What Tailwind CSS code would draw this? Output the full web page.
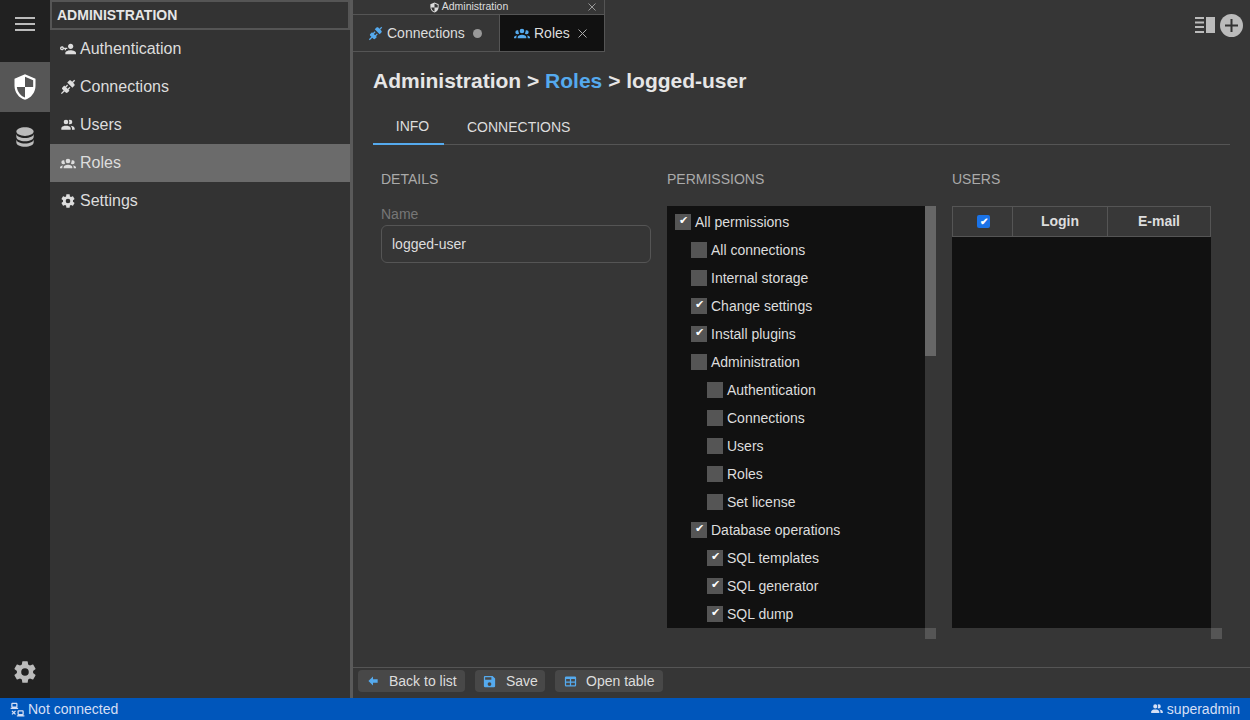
<!DOCTYPE html>
<html lang="en">
<head>
  <meta charset="UTF-8">
  <title>Administration</title>
  <script src="https://cdn.jsdelivr.net/npm/@tailwindcss/browser@4"></script>
</head>
<body class="w-[1250px] h-[720px] overflow-hidden bg-[#363636] text-[#dddddd] font-['Liberation_Sans',Arial,sans-serif]">
<div class="flex flex-col h-[720px]">
  <div class="flex flex-1 min-h-0">

    <!-- icon rail -->
    <div class="w-[50px] bg-[#212121] flex flex-col items-center shrink-0">
      <div class="h-[62px] w-full flex flex-col items-center justify-center gap-[4px] pb-[14px]">
        <div class="w-[20px] h-[2px] bg-[#bbbbbb]"></div>
        <div class="w-[20px] h-[2px] bg-[#bbbbbb]"></div>
        <div class="w-[20px] h-[2px] bg-[#bbbbbb]"></div>
      </div>
      <div class="h-[50px] w-full bg-[#565656] flex items-center justify-center">
        <svg class="w-[28px] h-[28px] text-white" viewBox="0 0 24 24" fill="currentColor"><path transform="matrix(-1 0 0 1 24 0)" d="M12,12H19C18.47,16.11 15.72,19.78 12,20.92V12H5V6.3L12,3.19M12,1L3,5V11C3,16.55 6.84,21.73 12,23C17.16,21.73 21,16.55 21,11V5L12,1Z"/></svg>
      </div>
      <div class="h-[50px] w-full flex items-center justify-center">
        <svg class="w-[26px] h-[26px] text-[#bbbbbb]" viewBox="0 0 24 24" fill="currentColor"><path d="M12,3C7.58,3 4,4.79 4,7C4,9.21 7.58,11 12,11C16.42,11 20,9.21 20,7C20,4.79 16.42,3 12,3M4,9V12C4,14.21 7.58,16 12,16C16.42,16 20,14.21 20,12V9C20,11.21 16.42,13 12,13C7.58,13 4,11.21 4,9M4,14V17C4,19.21 7.58,21 12,21C16.42,21 20,19.21 20,17V14C20,16.21 16.42,18 12,18C7.58,18 4,16.21 4,14Z"/></svg>
      </div>
      <div class="mt-auto h-[39px] flex items-start justify-center">
        <svg class="w-[26px] h-[26px] text-[#bbbbbb]" viewBox="0 0 24 24" fill="currentColor"><path d="M12,15.5A3.5,3.5 0 0,1 8.5,12A3.5,3.5 0 0,1 12,8.5A3.5,3.5 0 0,1 15.5,12A3.5,3.5 0 0,1 12,15.5M19.43,12.97C19.47,12.65 19.5,12.33 19.5,12C19.5,11.67 19.47,11.34 19.43,11L21.54,9.37C21.73,9.22 21.78,8.95 21.66,8.73L19.66,5.27C19.54,5.05 19.27,4.96 19.05,5.05L16.56,6.05C16.04,5.66 15.5,5.32 14.87,5.07L14.5,2.42C14.46,2.18 14.25,2 14,2H10C9.75,2 9.54,2.18 9.5,2.42L9.13,5.07C8.5,5.32 7.96,5.66 7.44,6.05L4.95,5.05C4.73,4.96 4.46,5.05 4.34,5.27L2.34,8.73C2.21,8.95 2.27,9.22 2.46,9.37L4.57,11C4.53,11.34 4.5,11.67 4.5,12C4.5,12.33 4.53,12.65 4.57,12.97L2.46,14.63C2.27,14.78 2.21,15.05 2.34,15.27L4.34,18.73C4.46,18.95 4.73,19.03 4.95,18.95L7.44,17.94C7.96,18.34 8.5,18.68 9.13,18.93L9.5,21.58C9.54,21.82 9.75,22 10,22H14C14.25,22 14.46,21.82 14.5,21.58L14.87,18.93C15.5,18.67 16.04,18.34 16.56,17.94L19.05,18.95C19.27,19.03 19.54,18.95 19.66,18.73L21.66,15.27C21.78,15.05 21.73,14.78 21.54,14.63L19.43,12.97Z"/></svg>
      </div>
    </div>

    <!-- admin sidebar -->
    <div class="w-[300px] bg-[#333333] shrink-0">
      <div class="h-[30px] border-2 border-[#555555] flex items-center pl-[5px] text-[14px] font-bold text-[#e6e6e6]">ADMINISTRATION</div>
      <div class="h-[38px] flex items-center gap-[4px] pl-[10px] text-[16px]">
        <svg class="w-[16px] h-[16px] text-[#dddddd]" viewBox="0 0 24 24" fill="currentColor"><path d="M11 10V12H9V14H7V12H5.8C5.4 13.2 4.3 14 3 14C1.3 14 0 12.7 0 11S1.3 8 3 8C4.3 8 5.4 8.8 5.8 10H11M3 10C2.4 10 2 10.4 2 11S2.4 12 3 12 4 11.6 4 11 3.6 10 3 10M16 14C18.7 14 24 15.3 24 18V20H8V18C8 15.3 13.3 14 16 14M16 12C13.8 12 12 10.2 12 8S13.8 4 16 4 20 5.8 20 8 18.2 12 16 12Z"/></svg>
        <span>Authentication</span>
      </div>
      <div class="h-[38px] flex items-center gap-[4px] pl-[10px] text-[16px]">
        <svg class="w-[16px] h-[16px] text-[#dddddd]" viewBox="0 0 24 24" fill="currentColor"><path d="M21.4 7.5C22.2 8.3 22.2 9.6 21.4 10.3L18.6 13.1L10.8 5.3L13.6 2.5C14.4 1.7 15.7 1.7 16.5 2.5L18.3 4.3L21.3 1.3L22.7 2.7L19.7 5.7L21.4 7.5M15.6 13.3L14.2 11.9L11.4 14.7L9.3 12.6L12.1 9.8L10.7 8.4L7.9 11.2L6.4 9.8L3.6 12.6C2.8 13.4 2.8 14.7 3.6 15.4L5.4 17.2L1.4 21.2L2.8 22.6L6.8 18.6L8.6 20.4C9.4 21.2 10.7 21.2 11.4 20.4L14.2 17.6L12.8 16.2L15.6 13.3Z"/></svg>
        <span>Connections</span>
      </div>
      <div class="h-[38px] flex items-center gap-[4px] pl-[10px] text-[16px]">
        <svg class="w-[16px] h-[16px] text-[#dddddd]" viewBox="0 0 24 24" fill="currentColor"><path d="M16 17V19H2V17S2 13 9 13 16 17 16 17M12.5 7.5A3.5 3.5 0 1 0 9 11A3.5 3.5 0 0 0 12.5 7.5M15.94 13A5.32 5.32 0 0 1 18 17V19H22V17S22 13.37 15.94 13M15 4A3.39 3.39 0 0 0 13.07 4.59A5 5 0 0 1 13.07 10.41A3.39 3.39 0 0 0 15 11A3.5 3.5 0 0 0 15 4Z"/></svg>
        <span>Users</span>
      </div>
      <div class="h-[38px] flex items-center gap-[4px] pl-[10px] text-[16px] bg-[#6b6b6b]">
        <svg class="w-[16px] h-[16px] text-[#dddddd]" viewBox="0 0 24 24" fill="currentColor"><path d="M12,5.5A3.5,3.5 0 0,1 15.5,9A3.5,3.5 0 0,1 12,12.5A3.5,3.5 0 0,1 8.5,9A3.5,3.5 0 0,1 12,5.5M5,8C5.56,8 6.08,8.15 6.53,8.42C6.38,9.85 6.8,11.27 7.66,12.38C7.16,13.34 6.16,14 5,14A3,3 0 0,1 2,11A3,3 0 0,1 5,8M19,8A3,3 0 0,1 22,11A3,3 0 0,1 19,14C17.84,14 16.84,13.34 16.34,12.38C17.2,11.27 17.62,9.85 17.47,8.42C17.92,8.15 18.44,8 19,8M5.5,18.25C5.5,16.18 8.41,14.5 12,14.5C15.59,14.5 18.5,16.18 18.5,18.25V20H5.5V18.25M0,20V18.5C0,17.11 1.89,15.94 4.45,15.6C3.86,16.28 3.5,17.22 3.5,18.25V20H0M24,20H20.5V18.25C20.5,17.22 20.14,16.28 19.55,15.6C22.11,15.94 24,17.11 24,18.5V20Z"/></svg>
        <span>Roles</span>
      </div>
      <div class="h-[38px] flex items-center gap-[4px] pl-[10px] text-[16px]">
        <svg class="w-[16px] h-[16px] text-[#dddddd]" viewBox="0 0 24 24" fill="currentColor"><path d="M12,15.5A3.5,3.5 0 0,1 8.5,12A3.5,3.5 0 0,1 12,8.5A3.5,3.5 0 0,1 15.5,12A3.5,3.5 0 0,1 12,15.5M19.43,12.97C19.47,12.65 19.5,12.33 19.5,12C19.5,11.67 19.47,11.34 19.43,11L21.54,9.37C21.73,9.22 21.78,8.95 21.66,8.73L19.66,5.27C19.54,5.05 19.27,4.96 19.05,5.05L16.56,6.05C16.04,5.66 15.5,5.32 14.87,5.07L14.5,2.42C14.46,2.18 14.25,2 14,2H10C9.75,2 9.54,2.18 9.5,2.42L9.13,5.07C8.5,5.32 7.96,5.66 7.44,6.05L4.95,5.05C4.73,4.96 4.46,5.05 4.34,5.27L2.34,8.73C2.21,8.95 2.27,9.22 2.46,9.37L4.57,11C4.53,11.34 4.5,11.67 4.5,12C4.5,12.33 4.53,12.65 4.57,12.97L2.46,14.63C2.27,14.78 2.21,15.05 2.34,15.27L4.34,18.73C4.46,18.95 4.73,19.03 4.95,18.95L7.44,17.94C7.96,18.34 8.5,18.68 9.13,18.93L9.5,21.58C9.54,21.82 9.75,22 10,22H14C14.25,22 14.46,21.82 14.5,21.58L14.87,18.93C15.5,18.67 16.04,18.34 16.56,17.94L19.05,18.95C19.27,19.03 19.54,18.95 19.66,18.73L21.66,15.27C21.78,15.05 21.73,14.78 21.54,14.63L19.43,12.97Z"/></svg>
        <span>Settings</span>
      </div>
    </div>

    <!-- splitter -->
    <div class="w-[3px] bg-[#5a5a5a] shrink-0"></div>

    <!-- main -->
    <div class="flex-1 min-w-0 flex flex-col bg-[#363636]">
      <!-- tab strip -->
      <div class="h-[52px] flex shrink-0">
        <div class="w-[252px] flex flex-col border-r border-[#555555] border-b">
          <div class="h-[15px] border-b border-[#555555] flex items-center justify-center relative text-[10.5px] text-[#dddddd] gap-[2px] pr-[20px]">
            <svg class="w-[11px] h-[11px] text-[#dddddd]" viewBox="0 0 24 24" fill="currentColor"><path transform="matrix(-1 0 0 1 24 0)" d="M12,12H19C18.47,16.11 15.72,19.78 12,20.92V12H5V6.3L12,3.19M12,1L3,5V11C3,16.55 6.84,21.73 12,23C17.16,21.73 21,16.55 21,11V5L12,1Z"/></svg>
            <span>Administration</span>
            <svg class="absolute right-[8px] top-[3px] w-[8px] h-[8px] text-[#999999]" viewBox="0 0 8 8" fill="none" stroke="currentColor" stroke-width="1"><path d="M0.5 0.5L7.5 7.5M7.5 0.5L0.5 7.5"/></svg>
          </div>
          <div class="flex flex-1">
            <div class="w-[147px] border-r border-[#555555] flex items-center pl-[15px] gap-[4px] text-[14px]">
              <svg class="w-[15px] h-[15px] text-[#55aaee]" viewBox="0 0 24 24" fill="currentColor"><path d="M21.4 7.5C22.2 8.3 22.2 9.6 21.4 10.3L18.6 13.1L10.8 5.3L13.6 2.5C14.4 1.7 15.7 1.7 16.5 2.5L18.3 4.3L21.3 1.3L22.7 2.7L19.7 5.7L21.4 7.5M15.6 13.3L14.2 11.9L11.4 14.7L9.3 12.6L12.1 9.8L10.7 8.4L7.9 11.2L6.4 9.8L3.6 12.6C2.8 13.4 2.8 14.7 3.6 15.4L5.4 17.2L1.4 21.2L2.8 22.6L6.8 18.6L8.6 20.4C9.4 21.2 10.7 21.2 11.4 20.4L14.2 17.6L12.8 16.2L15.6 13.3Z"/></svg>
              <span>Connections</span>
              <span class="ml-[4px] w-[9px] h-[9px] rounded-full bg-[#999999]"></span>
            </div>
            <div class="flex-1 bg-[#111111] flex items-center pl-[14px] gap-[4px] text-[14px]">
              <svg class="w-[16px] h-[16px] text-[#55aaee]" viewBox="0 0 24 24" fill="currentColor"><path d="M12,5.5A3.5,3.5 0 0,1 15.5,9A3.5,3.5 0 0,1 12,12.5A3.5,3.5 0 0,1 8.5,9A3.5,3.5 0 0,1 12,5.5M5,8C5.56,8 6.08,8.15 6.53,8.42C6.38,9.85 6.8,11.27 7.66,12.38C7.16,13.34 6.16,14 5,14A3,3 0 0,1 2,11A3,3 0 0,1 5,8M19,8A3,3 0 0,1 22,11A3,3 0 0,1 19,14C17.84,14 16.84,13.34 16.34,12.38C17.2,11.27 17.62,9.85 17.47,8.42C17.92,8.15 18.44,8 19,8M5.5,18.25C5.5,16.18 8.41,14.5 12,14.5C15.59,14.5 18.5,16.18 18.5,18.25V20H5.5V18.25M0,20V18.5C0,17.11 1.89,15.94 4.45,15.6C3.86,16.28 3.5,17.22 3.5,18.25V20H0M24,20H20.5V18.25C20.5,17.22 20.14,16.28 19.55,15.6C22.11,15.94 24,17.11 24,18.5V20Z"/></svg>
              <span>Roles</span>
              <svg class="ml-[4px] w-[9px] h-[9px] text-[#aaaaaa]" viewBox="0 0 9 9" fill="none" stroke="currentColor" stroke-width="1"><path d="M0.5 0.5L8.5 8.5M8.5 0.5L0.5 8.5"/></svg>
            </div>
          </div>
        </div>
        <div class="flex-1 flex justify-end items-start pt-[14px] pr-[7px] gap-[5px]">
          <svg class="w-[20px] h-[16px] mt-[3px] text-[#bbbbbb]" viewBox="0 0 20 16" fill="currentColor"><rect x="0" y="0" width="9" height="2"/><rect x="0" y="4.5" width="9" height="2"/><rect x="0" y="9" width="9" height="2"/><rect x="0" y="14" width="9" height="2"/><rect x="11" y="0" width="9" height="16"/></svg>
          <svg class="w-[23px] h-[23px]" viewBox="0 0 23 23"><circle cx="11.5" cy="11.5" r="11.5" fill="#bbbbbb"/><path d="M10.5 5h2v5.5H18v2h-5.5V18h-2v-5.5H5v-2h5.5z" fill="#333333"/></svg>
        </div>
      </div>

      <!-- title -->
      <div class="pl-[20px] pt-[16px] h-[58px] text-[21px] leading-[26px] font-bold text-[#e6e6e6] shrink-0">Administration &gt; <span class="text-[#55aaee]">Roles</span> &gt; logged-user</div>

      <!-- inner tabs -->
      <div class="mx-[20px] h-[35px] flex border-b border-[#555555] text-[14px] shrink-0">
        <div class="w-[71px] h-[35px] border-b-2 border-[#55aaee] flex items-center justify-center pl-[8px]">INFO</div>
        <div class="ml-[23px] h-[34px] flex items-center">CONNECTIONS</div>
      </div>

      <!-- columns -->
      <div class="flex-1 min-h-0 flex pl-[28px] pt-[26px]">
        <div class="w-[270px] mr-[16px] shrink-0">
          <div class="h-[16px] leading-[16px] text-[14px] text-[#aaaaaa]">DETAILS</div>
          <div class="mt-[19px] h-[16px] leading-[16px] text-[14px] text-[#777777]">Name</div>
          <div class="mt-[3px] h-[38px] border border-[#555555] rounded-[6px] flex items-center pl-[10px] text-[14px]">logged-user</div>
        </div>

        <div class="w-[269px] mr-[16px] shrink-0">
          <div class="h-[16px] leading-[16px] text-[14px] text-[#aaaaaa]">PERMISSIONS</div>
          <div class="mt-[19px] flex">
            <div class="w-[258px] h-[422px] bg-[#111111] overflow-hidden pt-[2px] text-[14px]">
              <div class="h-[28px] flex items-center pl-[8px] gap-[4px]"><span class="w-[16px] h-[16px] bg-[#555555] text-[11px] leading-[13px] text-white text-center">✔</span>All permissions</div>
              <div class="h-[28px] flex items-center pl-[24px] gap-[4px]"><span class="w-[16px] h-[16px] bg-[#555555]"></span>All connections</div>
              <div class="h-[28px] flex items-center pl-[24px] gap-[4px]"><span class="w-[16px] h-[16px] bg-[#555555]"></span>Internal storage</div>
              <div class="h-[28px] flex items-center pl-[24px] gap-[4px]"><span class="w-[16px] h-[16px] bg-[#555555] text-[11px] leading-[13px] text-white text-center">✔</span>Change settings</div>
              <div class="h-[28px] flex items-center pl-[24px] gap-[4px]"><span class="w-[16px] h-[16px] bg-[#555555] text-[11px] leading-[13px] text-white text-center">✔</span>Install plugins</div>
              <div class="h-[28px] flex items-center pl-[24px] gap-[4px]"><span class="w-[16px] h-[16px] bg-[#555555]"></span>Administration</div>
              <div class="h-[28px] flex items-center pl-[40px] gap-[4px]"><span class="w-[16px] h-[16px] bg-[#555555]"></span>Authentication</div>
              <div class="h-[28px] flex items-center pl-[40px] gap-[4px]"><span class="w-[16px] h-[16px] bg-[#555555]"></span>Connections</div>
              <div class="h-[28px] flex items-center pl-[40px] gap-[4px]"><span class="w-[16px] h-[16px] bg-[#555555]"></span>Users</div>
              <div class="h-[28px] flex items-center pl-[40px] gap-[4px]"><span class="w-[16px] h-[16px] bg-[#555555]"></span>Roles</div>
              <div class="h-[28px] flex items-center pl-[40px] gap-[4px]"><span class="w-[16px] h-[16px] bg-[#555555]"></span>Set license</div>
              <div class="h-[28px] flex items-center pl-[24px] gap-[4px]"><span class="w-[16px] h-[16px] bg-[#555555] text-[11px] leading-[13px] text-white text-center">✔</span>Database operations</div>
              <div class="h-[28px] flex items-center pl-[40px] gap-[4px]"><span class="w-[16px] h-[16px] bg-[#555555] text-[11px] leading-[13px] text-white text-center">✔</span>SQL templates</div>
              <div class="h-[28px] flex items-center pl-[40px] gap-[4px]"><span class="w-[16px] h-[16px] bg-[#555555] text-[11px] leading-[13px] text-white text-center">✔</span>SQL generator</div>
              <div class="h-[28px] flex items-center pl-[40px] gap-[4px]"><span class="w-[16px] h-[16px] bg-[#555555] text-[11px] leading-[13px] text-white text-center">✔</span>SQL dump</div>
            </div>
            <div class="w-[11px] flex flex-col">
              <div class="h-[150px] bg-[#666666]"></div>
              <div class="mt-[272px] h-[11px] bg-[#555555]"></div>
            </div>
          </div>
        </div>

        <div class="w-[270px] shrink-0">
          <div class="h-[16px] leading-[16px] text-[14px] text-[#aaaaaa]">USERS</div>
          <div class="mt-[19px] flex">
            <div class="w-[259px] h-[422px] bg-[#111111]">
              <div class="h-[31px] bg-[#383838] border border-[#555555] flex text-[14px] font-bold">
                <div class="w-[60px] border-r border-[#555555] flex items-center justify-center pl-[2px]"><span class="w-[13px] h-[13px] bg-[#1a73e8] rounded-[2px] flex items-center justify-center text-[10px] leading-none text-white">✔</span></div>
                <div class="w-[95px] border-r border-[#555555] flex items-center justify-center">Login</div>
                <div class="flex-1 flex items-center justify-center">E-mail</div>
              </div>
            </div>
            <div class="w-[11px] flex flex-col">
              <div class="mt-[422px] h-[11px] bg-[#555555]"></div>
            </div>
          </div>
        </div>
      </div>

      <!-- footer buttons -->
      <div class="h-[31px] border-t border-[#555555] flex items-start pt-[2px] pl-[5px] gap-[10px] text-[14px] shrink-0">
        <div class="h-[22px] w-[107px] bg-[#484848] rounded-[4px] flex items-center pl-[8px]">
          <svg class="w-[14px] h-[14px] text-[#55aaee] mr-[9px]" viewBox="0 0 24 24" fill="currentColor"><path d="M20,9V15H12V19.84L4.16,12L12,4.16V9H20Z"/></svg>Back to list
        </div>
        <div class="h-[22px] w-[70px] bg-[#484848] rounded-[4px] flex items-center pl-[7px]">
          <svg class="w-[15px] h-[15px] text-[#55aaee] mr-[9px]" viewBox="0 0 24 24" fill="currentColor"><path d="M15,9H5V5H15M12,19A3,3 0 0,1 9,16A3,3 0 0,1 12,13A3,3 0 0,1 15,16A3,3 0 0,1 12,19M17,3H5C3.89,3 3,3.9 3,5V19A2,2 0 0,0 5,21H19A2,2 0 0,0 21,19V7L17,3Z"/></svg>Save
        </div>
        <div class="h-[22px] w-[108px] bg-[#484848] rounded-[4px] flex items-center pl-[8px]">
          <svg class="w-[15px] h-[15px] text-[#55aaee] mr-[8px]" viewBox="0 0 24 24" fill="currentColor"><path d="M5,4H19A2,2 0 0,1 21,6V18A2,2 0 0,1 19,20H5A2,2 0 0,1 3,18V6A2,2 0 0,1 5,4M5,8V12H11V8H5M13,8V12H19V8H13M5,14V18H11V14H5M13,14V18H19V14H13Z"/></svg>Open table
        </div>
      </div>
    </div>
  </div>

  <!-- status bar -->
  <div class="h-[22px] bg-[#0056bb] flex items-center justify-between pl-[10px] pr-[10px] text-[14px] text-[#d5dff5] shrink-0">
    <div class="flex items-center gap-[3px]">
      <svg class="w-[15px] h-[15px]" viewBox="0 0 24 24" fill="currentColor"><path d="M4,1C2.89,1 2,1.89 2,3V7C2,8.11 2.89,9 4,9H1V11H13V9H10C11.11,9 12,8.11 12,7V3C12,1.89 11.11,1 10,1H4M4,3H10V7H4V3M14,13C12.89,13 12,13.89 12,15V19C12,20.11 12.89,21 14,21H11V23H23V21H20C21.11,21 22,20.11 22,19V15C22,13.89 21.11,13 20,13H14M3.88,13.46L2.46,14.88L4.59,17L2.46,19.12L3.88,20.54L6,18.41L8.12,20.54L9.54,19.12L7.41,17L9.54,14.88L8.12,13.46L6,15.59L3.88,13.46M14,15H20V19H14V15Z"/></svg>
      <span>Not connected</span>
    </div>
    <div class="flex items-center gap-[3px]">
      <svg class="w-[14px] h-[14px]" viewBox="0 0 24 24" fill="currentColor"><path d="M16 17V19H2V17S2 13 9 13 16 17 16 17M12.5 7.5A3.5 3.5 0 1 0 9 11A3.5 3.5 0 0 0 12.5 7.5M15.94 13A5.32 5.32 0 0 1 18 17V19H22V17S22 13.37 15.94 13M15 4A3.39 3.39 0 0 0 13.07 4.59A5 5 0 0 1 13.07 10.41A3.39 3.39 0 0 0 15 11A3.5 3.5 0 0 0 15 4Z"/></svg>
      <span>superadmin</span>
    </div>
  </div>
</div>
</body>
</html>
